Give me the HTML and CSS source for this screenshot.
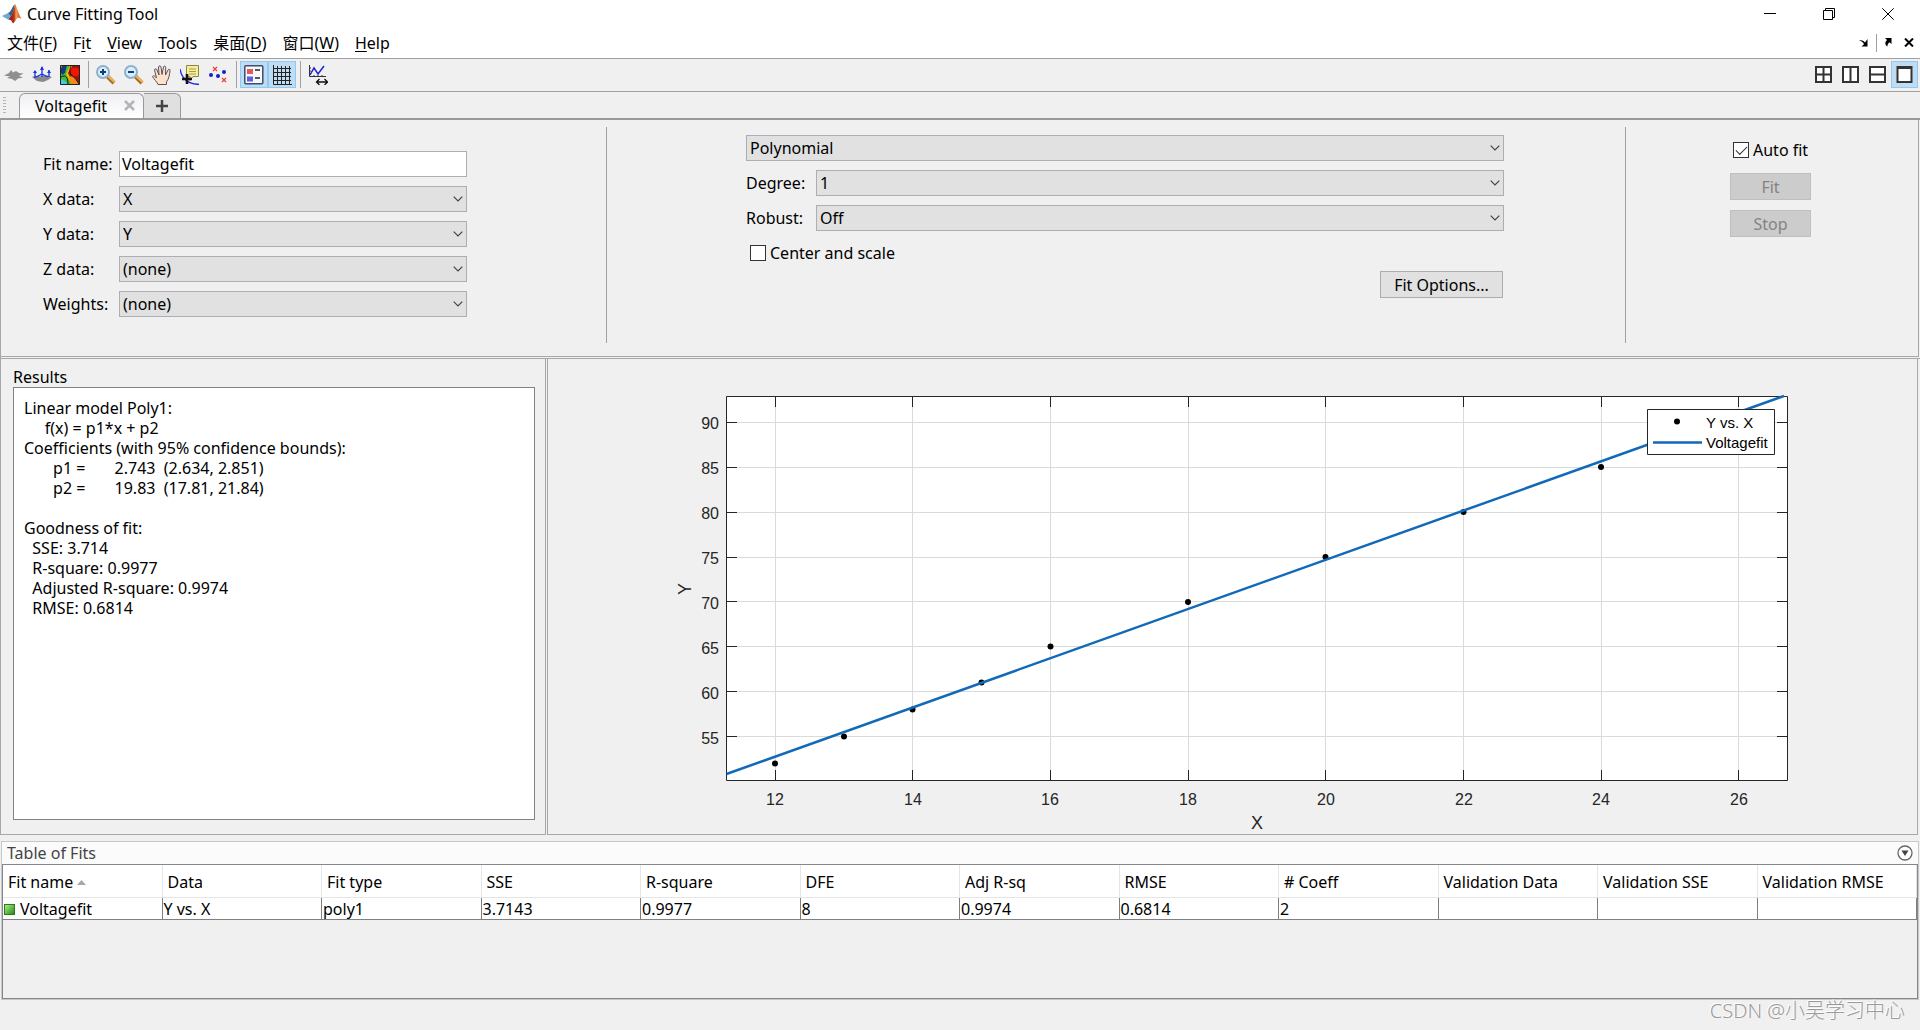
FILE: index.html
```html
<!DOCTYPE html>
<html lang="zh-CN">
<head>
<meta charset="utf-8">
<title>Curve Fitting Tool</title>
<link rel="stylesheet" href="styles.css">
</head>
<body>
<svg class="defs" aria-hidden="true">
  <symbol id="chevron" viewBox="0 0 10 6"><path d="M.7.7 5 5 9.300.7" fill="none" stroke="#444" stroke-width="1.200"/></symbol>
</svg>
<div class="window">
  <header class="titlebar">
    <svg class="logo" viewBox="0 0 20 20" width="20" height="20">
      <defs><linearGradient id="flame" x1="0" x2="1"><stop offset="0" stop-color="#7a1c14"/><stop offset=".45" stop-color="#b5301a"/><stop offset=".6" stop-color="#f6a050"/><stop offset="1" stop-color="#c5401a"/></linearGradient></defs>
      <path d="M0 12 6 9l3.500 3.500L6 15.500z" fill="#6aa9d8"/>
      <path d="M6 9c3-.8 4-6 6.500-8.500 .3 4-1.500 8.500-3.500 12z" fill="#3a5f86"/>
      <path d="M6 15.500c3-2 5-7 6-11L13 0c1.500 1.500 3.500 10 6.500 15-2-1.500-3.500-2-5 0-1 1.500-2 3.500-3.500 4.500C10 17.500 9 15 6 15.500z" fill="url(#flame)"/>
    </svg>
    <h1>Curve Fitting Tool</h1>
    <div class="window-controls">
      <button aria-label="Minimize"><svg width="12" height="12" viewBox="0 0 12 12"><path d="M0 5.500h12" class="ink"/></svg></button>
      <button aria-label="Restore"><svg width="12" height="12" viewBox="0 0 12 12"><path d="M.5 2.500h9v9h-9zM2.500 2.500v-2h9v9h-2" class="ink"/></svg></button>
      <button aria-label="Close"><svg width="12" height="12" viewBox="0 0 12 12"><path d="M.3.3l11.400 11.400M11.700.3.3 11.700" class="ink"/></svg></button>
    </div>
  </header>
  <nav class="menubar">
    <a href="#">文件(<u>F</u>)</a>
    <a href="#">F<u>i</u>t</a>
    <a href="#"><u>V</u>iew</a>
    <a href="#"><u>T</u>ools</a>
    <a href="#">桌面(<u>D</u>)</a>
    <a href="#">窗口(<u>W</u>)</a>
    <a href="#"><u>H</u>elp</a>
    <div class="dock-controls">
      <button aria-label="Dock"><svg width="10" height="8" viewBox="0 0 10 8"><path d="M0 1.500c3-1 5 .5 6 2L8.500 0v7.500H2.500L5 5.200C4 3 2.500 1.800 0 1.500z"/></svg></button>
      <span class="dock-rule"></span>
      <button aria-label="Undock"><svg width="8" height="9" viewBox="0 0 8 9"><path d="M1 0h6.500v6L5.500 4.300C4 5.500 3.300 6.800 3.500 8.500 1 7 .5 4.500 3 2z"/></svg></button>
      <button aria-label="Close document"><svg width="10" height="9" viewBox="0 0 10 9"><path d="M1 .5l8 8M9 .5l-8 8" fill="none" stroke="#000" stroke-width="2"/></svg></button>
    </div>
  </nav>
  <div class="toolbar">
    <button aria-label="Residuals plot"><svg width="20" height="20" viewBox="0 0 20 20"><path d="M0 10.500 5 8l2-3 2 2.500L12 6l3 2 4.500.5L15 11l4 1.500-5 1-3 2.500-3-2-5-1 3-1.500z" fill="#8f8f8f"/></svg></button>
    <button aria-label="Main plot"><svg width="20" height="20" viewBox="0 0 20 20"><path d="M0 12c4-2 6 0 10-1s7 0 10 1l-4 3-5 2-6-1z" fill="#8a8a8a"/><path d="M3 13V6M10 12V2M17 12V5M10 9l-6 3M10 9l6 3" stroke="#1430e8" stroke-width="1.300"/><path d="M1 8l2-3 2 3zM8 5l2-4 2 4zM15 8l2-3 2 3z" fill="#1430e8"/></svg></button>
    <button aria-label="Contour plot"><svg width="20" height="20" viewBox="0 0 20 20"><path d="M0 0h20v20H0z" fill="#a11203"/><path d="M0 0h13L8 8l6 12H0z" fill="#f3b800"/><path d="M0 2l6-2h4L6 9l6 11H0z" fill="#48b83c"/><path d="M3 0h4L5 8 2 10 0 5z" fill="#143a7c"/><path d="M0 14l5 2 3 4H0z" fill="#42cde4"/><path d="M9 12c3-2 6 0 7 2l4 6h-9z" fill="#f28a13"/><circle cx="15" cy="7" r="4.500" fill="#ef1608"/><path d="M1 12C6 9 8 13 8 19M11 1C9 6 9 9 15 13l4 6" fill="none" stroke="#161616"/><path d="M.5.5h19v19H.5z" fill="none" stroke="#222"/></svg></button>
    <span class="rule"></span>
    <button aria-label="Zoom in"><svg width="20" height="20" viewBox="0 0 20 20"><path d="M11.500 11.500 18 18" stroke="#a86b1e" stroke-width="4"/><path d="M12 11l6.500 6" stroke="#f3b45d" stroke-width="2"/><circle cx="7" cy="7" r="6" fill="#d7effc" stroke="#8fb0cc" stroke-width="2"/><path d="M4 7h6M7 4v6" stroke="#173b78" stroke-width="2"/></svg></button>
    <button aria-label="Zoom out"><svg width="20" height="20" viewBox="0 0 20 20"><path d="M11.500 11.500 18 18" stroke="#a86b1e" stroke-width="4"/><path d="M12 11l6.500 6" stroke="#f3b45d" stroke-width="2"/><circle cx="7" cy="7" r="6" fill="#d7effc" stroke="#8fb0cc" stroke-width="2"/><path d="M4 7h6" stroke="#173b78" stroke-width="2"/></svg></button>
    <button aria-label="Pan"><svg width="20" height="20" viewBox="0 0 20 20"><path d="M6 19.500c-1-3-4-5-5.500-8 1-1.500 2.500-.5 4 1.500L2.500 5c.5-1.800 2-1.500 2.500 0l2 5L6.500 2C7 .3 8.500.5 9 2l1 7.500L11.500 2c.5-1.500 2.200-1.200 2.200.5L13.500 10l2.500-5c.8-1.500 2.500-.8 2 .8-.5 3.700-1 8-3.500 11v2.700z" fill="#fbe2c8" stroke="#5b5060"/></svg></button>
    <button aria-label="Data cursor"><svg width="20" height="20" viewBox="0 0 20 20"><path d="M0 4c1 6 3 9 7 12s8 3 12 3.500" fill="none" stroke="#1d20ee" stroke-width="1.400"/><path d="M6.500.5h12v11H13l-3 4v-4H6.500z" fill="#f7ee9c" stroke="#8b8748"/><path d="M9 4h7M9 6.500h7M9 9h7" stroke="#a49c50"/><path d="M2 14h10M7 9v10" stroke="#111" stroke-width="2.600"/></svg></button>
    <button aria-label="Exclude outliers"><svg width="20" height="20" viewBox="0 0 20 20"><path d="M5 2l4 4M9 2 5 6M14 13l4 4M18 13l-4 4" stroke="#ee3b3b" stroke-width="1.200"/><g fill="#1420c8"><circle cx="3" cy="10" r="2"/><circle cx="10" cy="11" r="2"/><circle cx="16" cy="7" r="2"/></g></svg></button>
    <span class="rule"></span>
    <button class="on" aria-label="Legend" aria-pressed="true"><svg width="20" height="20" viewBox="0 0 20 20"><rect x=".8" y=".8" width="18" height="18" rx="1" fill="#f7f8fc" stroke="#3c4e6c" stroke-width="1.500"/><path d="M3 4h6v5H3z" fill="#e05c5c"/><path d="M3 11.500h6v5H3z" fill="#5a5ee0"/><path d="M11 5h5M11 13h5" stroke="#222" stroke-width="1.300"/></svg></button>
    <button class="on" aria-label="Grid" aria-pressed="true"><svg width="20" height="20" viewBox="0 0 20 20"><path d="M5.500 1v18M9.500 1v18M13.500 1v18M17.500 1v18M1 3.500h18M1 7.500h18M1 11.500h18M1 15.500h18M1.500 0v19.500H20" fill="none" stroke="#222"/></svg></button>
    <span class="rule"></span>
    <button aria-label="Axes limits"><svg width="20" height="20" viewBox="0 0 20 20"><path d="M1.500 0v11.500H18M1 3h2M1 6h2M1 9h2M6 12v-2M10 12v-2M14 12v-2" fill="none" stroke="#333"/><path d="M2 10l4-7 4 6 6-8" fill="none" stroke="#1c22d8" stroke-width="1.500"/><path d="M9 17h10M11.500 14 8.500 17l3 3M16.500 14l3 3-3 3" fill="none" stroke="#111" stroke-width="1.300"/></svg></button>
    <div class="tiling">
      <button aria-label="Tile"><svg width="17" height="17" viewBox="0 0 17 17"><path d="M1 1h15v15H1zM8.500 1v15M1 8.500h15" class="tile"/></svg></button>
      <button aria-label="Left and right"><svg width="17" height="17" viewBox="0 0 17 17"><path d="M1 1h15v15H1zM8.500 1v15" class="tile"/></svg></button>
      <button aria-label="Top and bottom"><svg width="17" height="17" viewBox="0 0 17 17"><path d="M1 1h15v15H1zM1 8.500h15" class="tile"/></svg></button>
      <button class="on" aria-label="Single" aria-pressed="true"><svg width="17" height="17" viewBox="0 0 17 17"><path d="M1.500 1h14v15h-14zM1.500 2h14" class="tile"/></svg></button>
    </div>
  </div>
  <div class="tabs">
    <span class="grip"></span>
    <div class="tab"><a href="#">Voltagefit</a><button aria-label="Close tab"><svg width="11" height="11" viewBox="0 0 11 11"><path d="M1 1l9 9M10 1l-9 9" fill="none" stroke="#b4b4b4" stroke-width="2.500"/></svg></button></div>
    <button class="add-tab" aria-label="New fit"><svg width="12" height="12" viewBox="0 0 12 12"><path d="M0 6h12M6 0v12" stroke="#444" stroke-width="2.500"/></svg></button>
  </div>
  <main>
    <section class="settings">
      <form class="data-form">
        <label for="name">Fit name:</label><input class="field" id="name" type="text" value="Voltagefit">
        <label for="xdata">X data:</label><span class="combo"><select id="xdata"><option>X</option></select><svg><use href="#chevron"/></svg></span>
        <label for="ydata">Y data:</label><span class="combo"><select id="ydata"><option>Y</option></select><svg><use href="#chevron"/></svg></span>
        <label for="zdata">Z data:</label><span class="combo"><select id="zdata"><option>(none)</option></select><svg><use href="#chevron"/></svg></span>
        <label for="weights">Weights:</label><span class="combo"><select id="weights"><option>(none)</option></select><svg><use href="#chevron"/></svg></span>
      </form>
      <form class="model-form">
        <span class="combo wide"><select aria-label="Fit type"><option>Polynomial</option></select><svg><use href="#chevron"/></svg></span>
        <label for="degree">Degree:</label><span class="combo"><select id="degree"><option>1</option></select><svg><use href="#chevron"/></svg></span>
        <label for="robust">Robust:</label><span class="combo"><select id="robust"><option>Off</option></select><svg><use href="#chevron"/></svg></span>
        <label class="check wide"><input type="checkbox">Center and scale</label>
        <button class="push options wide" type="button">Fit Options...</button>
      </form>
      <form class="run-form">
        <label class="check"><input type="checkbox" checked>Auto fit</label>
        <button class="push" type="button" disabled>Fit</button>
        <button class="push" type="button" disabled>Stop</button>
      </form>
    </section>
    <div class="panes">
      <section class="results">
        <h2>Results</h2>
<pre>Linear model Poly1:
     f(x) = p1*x + p2
Coefficients (with 95% confidence bounds):
       p1 =       2.743  (2.634, 2.851)
       p2 =       19.83  (17.81, 21.84)

Goodness of fit:
  SSE: 3.714
  R-square: 0.9977
  Adjusted R-square: 0.9974
  RMSE: 0.6814</pre>
      </section>
      <section class="plot">
        <svg class="chart" viewBox="548 359 1369 475" role="img" aria-label="Y vs. X with Voltagefit">
          <path d="M726.500 396.500h1061v384h-1061z" fill="#fff"/>
          <path class="gridline" d="M775.500 397v383M912.500 397v383M1050.500 397v383M1188.500 397v383M1325.500 397v383M1463.500 397v383M1601.500 397v383M1738.500 397v383M727 422.500h1060M727 467.500h1060M727 512.500h1060M727 557.500h1060M727 601.500h1060M727 646.500h1060M727 691.500h1060M727 736.500h1060"/>
          <path class="axis" d="M726.500 396.500h1061v384h-1061zM775.500 780v-10M912.500 780v-10M1050.500 780v-10M1188.500 780v-10M1325.500 780v-10M1463.500 780v-10M1601.500 780v-10M1738.500 780v-10M775.500 397v10M912.500 397v10M1050.500 397v10M1188.500 397v10M1325.500 397v10M1463.500 397v10M1601.500 397v10M1738.500 397v10M727 422.500h10M727 467.500h10M727 512.500h10M727 557.500h10M727 601.500h10M727 646.500h10M727 691.500h10M727 736.500h10M1787 422.500h-10M1787 467.500h-10M1787 512.500h-10M1787 557.500h-10M1787 601.500h-10M1787 646.500h-10M1787 691.500h-10M1787 736.500h-10"/>
          <g>
            <circle cx="775" cy="763.500" r="3"/><circle cx="844" cy="736.500" r="3"/><circle cx="912.500" cy="709.500" r="3"/><circle cx="981.500" cy="682.500" r="3"/><circle cx="1050.500" cy="646.500" r="3"/><circle cx="1188" cy="602" r="3"/><circle cx="1325.500" cy="557" r="3"/><circle cx="1463.500" cy="512" r="3"/><circle cx="1601" cy="467" r="3"/>
          </g>
          <path class="fit" d="M726.500 774 1784 396"/>
          <g class="ticks" text-anchor="middle">
            <text x="775" y="805">12</text><text x="913" y="805">14</text><text x="1050" y="805">16</text><text x="1188" y="805">18</text><text x="1326" y="805">20</text><text x="1464" y="805">22</text><text x="1601" y="805">24</text><text x="1739" y="805">26</text>
          </g>
          <g class="ticks" text-anchor="end">
            <text x="719" y="429">90</text><text x="719" y="474">85</text><text x="719" y="519">80</text><text x="719" y="564">75</text><text x="719" y="609">70</text><text x="719" y="654">65</text><text x="719" y="699">60</text><text x="719" y="744">55</text>
          </g>
          <text class="axis-name" x="1257" y="829" text-anchor="middle">X</text>
          <text class="axis-name" transform="translate(691 589) rotate(-90)" text-anchor="middle">Y</text>
          <path d="M1647.500 409.500h127v45h-127z" fill="#fff" stroke="#262626"/>
          <circle cx="1677" cy="421.500" r="3"/>
          <path class="fit" d="M1653 442.500h49"/>
          <g class="legend"><text x="1706" y="428">Y vs. X</text><text x="1706" y="448">Voltagefit</text></g>
        </svg>
      </section>
    </div>
  </main>
  <section class="fits">
    <header><h2>Table of Fits</h2><button aria-label="Table options"><svg width="16" height="16" viewBox="0 0 16 16"><circle cx="8" cy="8" r="7" fill="#fff" stroke="#666" stroke-width="1.300"/><path d="M4.500 5.500h7L8 11z" fill="#444"/></svg></button></header>
    <div class="table-area">
      <table>
        <thead><tr><th>Fit name<svg class="sort" width="9" height="5" viewBox="0 0 9 5"><path d="M4.500 0 9 5H0z" fill="#a8a8a0"/></svg></th><th>Data</th><th>Fit type</th><th>SSE</th><th>R-square</th><th>DFE</th><th>Adj R-sq</th><th>RMSE</th><th># Coeff</th><th>Validation Data</th><th>Validation SSE</th><th>Validation RMSE</th></tr></thead>
        <tbody><tr><td><span class="swatch"></span>Voltagefit</td><td>Y vs. X</td><td>poly1</td><td>3.7143</td><td>0.9977</td><td>8</td><td>0.9974</td><td>0.6814</td><td>2</td><td></td><td></td><td></td></tr></tbody>
      </table>
    </div>
  </section>
  <footer>CSDN @小吴学习中心</footer>
</div>
</body>
</html>
```
FILE: styles.css
```css
* { box-sizing: border-box; }

body {
  margin: 0;
  background: #f0f0f0;
  color: #000;
  font: 16px/20px "Noto Sans", "Noto Sans CJK SC", sans-serif;
}

h1, h2, pre { margin: 0; font: inherit; }
a { color: inherit; text-decoration: none; }
svg { display: block; flex: none; }
button, input, select { margin: 0; font: inherit; color: inherit; }

button {
  display: flex;
  align-items: center;
  justify-content: center;
  padding: 0;
  border: 0;
  background: none;
}

.defs { position: absolute; width: 0; height: 0; }
.ink { fill: none; stroke: #000; }
.tile { fill: #fff; stroke: #333; stroke-width: 2; }

.window {
  display: flex;
  flex-direction: column;
  min-height: 100vh;
}

/* Title bar and menus */
.titlebar {
  display: flex;
  align-items: center;
  gap: 5px;
  height: 29px;
  padding: 0 26px 1px 2px;
  background: #fff;
}
.window-controls { display: flex; gap: 47px; margin-left: auto; }

.menubar {
  display: flex;
  align-items: center;
  gap: 16px;
  height: 30px;
  padding: 0 6px 2px 7px;
  border-bottom: 1px solid #a0a0a0;
  background: #fff;
}
.menubar u { text-underline-offset: 2px; }
.dock-controls { display: flex; align-items: center; gap: 7px; margin-left: auto; }
.dock-controls button:last-child { margin-left: 5px; }
.dock-rule { width: 1px; height: 18px; background: #a0a0a0; }

/* Toolbar */
.toolbar {
  display: flex;
  align-items: center;
  height: 33px;
  padding: 0 2px 1px 0;
  border-bottom: 1px solid #a0a0a0;
}
.toolbar button { width: 28px; height: 27px; }
.toolbar .on { border: 1px solid #90c8f6; background: #c0dcf3; }
.rule { width: 1px; height: 27px; margin: 0 3px 0 4px; background: #a0a0a0; }
.tiling { display: flex; margin-left: auto; }
.tiling button { width: 27px; }

/* Document tabs */
.tabs {
  display: flex;
  align-items: flex-end;
  height: 28px;
  padding-left: 3px;
  border-bottom: 2px solid #999;
}
.grip {
  width: 3px;
  height: 16px;
  margin: 0 13px 5px 0;
  background: repeating-linear-gradient(#b4b4b4 0 1px, #f0f0f0 1px 3px);
}
.tab {
  display: flex;
  align-items: center;
  justify-content: space-between;
  width: 125px;
  height: 25px;
  padding: 0 8px 1px 15px;
  border: 1px solid #999;
  border-bottom: 0;
  border-radius: 6px 6px 0 0;
  background: linear-gradient(#f0f0f4, #fff);
}
.add-tab {
  width: 37px;
  height: 25px;
  border: 1px solid #999;
  border-width: 1px 1px 0 0;
  border-radius: 0 6px 0 0;
  background: #e0e0e0;
}

/* Fit settings */
main {
  display: flex;
  flex: 1;
  flex-direction: column;
  border-left: 1px solid #a8a8a8;
}
.settings {
  display: grid;
  grid-template-columns: 606fr 1019fr 292fr;
  height: 237px;
  margin-right: 1px;
  padding: 7px 0 13px;
  border: 1px solid #a8a8a8;
  border-width: 0 1px 1px 0;
}
.settings form { display: grid; align-content: start; }
.data-form, .model-form { border-right: 1px solid #a0a0a0; }
.data-form {
  grid-template-columns: 76px 1fr;
  gap: 9px 0;
  padding: 24px 139px 0 42px;
}
.model-form {
  grid-template-columns: 70px 1fr;
  gap: 9px 0;
  padding: 8px 121px 0 139px;
}
.run-form { gap: 10px; padding: 10px 0 0 104px; }
.wide { grid-column: 1 / -1; }
.settings label { line-height: 26px; }

.field, select {
  width: 100%;
  height: 26px;
  padding: 0 3px;
  border: 1px solid #adadb3;
  border-radius: 0;
}
.field { padding: 0 2px; background: #fff; }
select { appearance: none; background: #e1e1e1; }
.combo { position: relative; }
.combo svg {
  position: absolute;
  top: 10px;
  right: 4px;
  width: 10px;
  height: 6px;
  pointer-events: none;
}

.settings .check { display: flex; align-items: center; gap: 4px; }
.model-form .check { height: 22px; padding: 4px 0 0 4px; }
.run-form .check { height: 26px; padding-left: 3px; }
.check input {
  appearance: none;
  width: 16px;
  height: 16px;
  border: 1px solid #333;
  background: #fff;
}
.check input:checked::after {
  content: "";
  display: block;
  width: 10px;
  height: 5px;
  margin: 3px 0 0 2px;
  border: solid #333;
  border-width: 0 0 1px 1px;
  transform: rotate(-45deg);
}
.push {
  width: 81px;
  height: 27px;
  border: 1px solid #adadad;
  background: #e1e1e1;
}
.push:disabled { border-color: #bfbfbf; background: #ccc; color: #838383; }
.options { justify-self: end; width: 123px; margin-right: 1px; }

/* Results and plot */
.panes {
  display: grid;
  flex: 1;
  grid-template-columns: 545fr 1374fr;
  margin-top: 1px;
  border-top: 1px solid #a8a8a8;
}
.results {
  display: flex;
  flex-direction: column;
  padding: 8px 10px 14px 12px;
  border: 1px solid #a8a8a8;
  border-width: 0 1px 1px 0;
}
.results pre {
  flex: 1;
  padding: 10px;
  border: 1px solid #828282;
  background: #fff;
}
.plot {
  display: flex;
  margin-left: 1px;
  margin-right: 2px;
  border: 1px solid #a8a8a8;
  border-top: 0;
}
.chart { flex: 1; width: 100%; height: 100%; min-width: 0; }
.gridline { fill: none; stroke: #dadada; }
.axis { fill: none; stroke: #262626; }
.fit { fill: none; stroke: #1169b8; stroke-width: 2.500; }
.chart text { font-family: "Liberation Sans", Arial, sans-serif; fill: #262626; }
.ticks { font-size: 16px; }
.axis-name { font-size: 18px; }
.chart .legend text { font-size: 15px; fill: #000; }

/* Table of fits */
.fits { margin: 6px 1px 0; border: 1px solid #c8c8c8; }
.fits header {
  display: flex;
  align-items: center;
  justify-content: space-between;
  height: 22px;
  padding: 0 5px 1px;
  background: #fbfbfb;
  color: #444;
}
.table-area { height: 135px; border: 1px solid #828790; }
table { width: 100%; table-layout: fixed; border-collapse: separate; border-spacing: 0; background: #fff; }
th, td { padding: 0; text-align: left; font-weight: 400; white-space: nowrap; }
th {
  height: 33px;
  padding: 2px 0 0 5px;
  border: 1px solid #e5e5e5;
  border-width: 0 1px 1px 0;
}
td { height: 22px; border: 1px solid #808080; border-width: 0 1px 1px 0; padding-left: 1px; }
.sort { display: inline-block; margin-left: 4px; vertical-align: 3px; }
.swatch {
  display: inline-block;
  width: 11px;
  height: 11px;
  margin-right: 5px;
  border: 1px solid #2c7a1a;
  background: linear-gradient(135deg, #a5ee86, #2d8a14);
}

footer {
  height: 30px;
  padding: 1px 15px 0;
  color: #9a9a9a;
  font-size: 20px;
  font-weight: 300;
  text-align: right;
  text-shadow: -1px -1px #fff;
}
```
